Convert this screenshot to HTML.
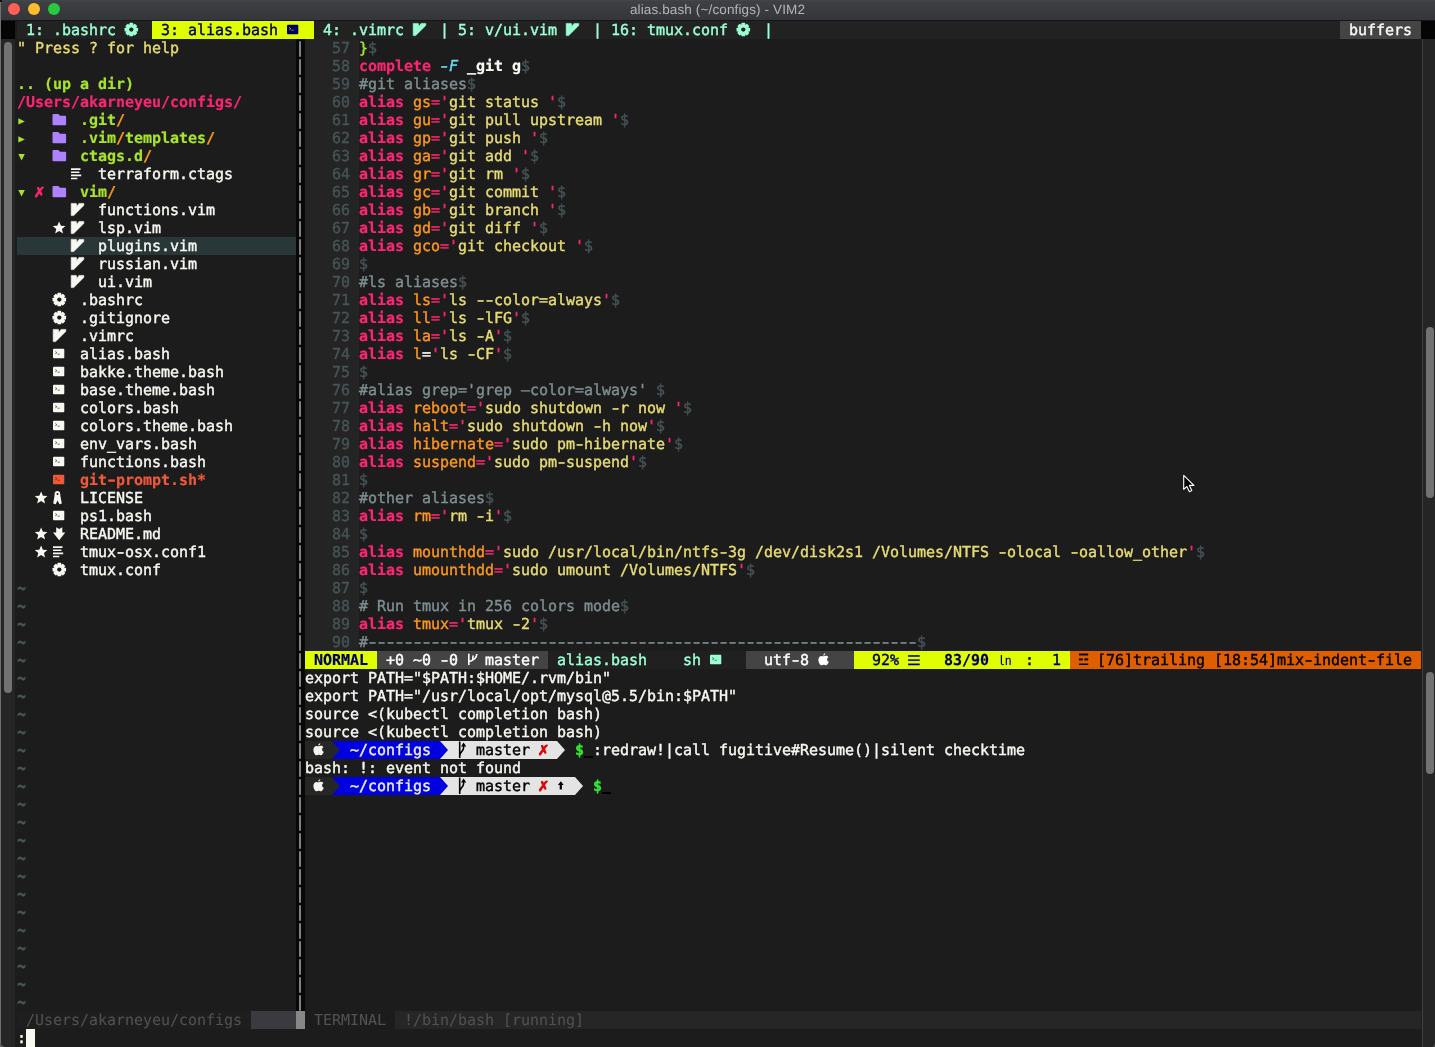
<!DOCTYPE html>
<html lang="en"><head><meta charset="utf-8"><title>alias.bash (~/configs) - VIM2</title>
<style>
html,body{margin:0;padding:0}
body{width:1435px;height:1047px;overflow:hidden;background:#1c1c1c;position:relative;font-family:"DejaVu Sans Mono","Liberation Mono",monospace;font-size:15px;letter-spacing:-0.031px;text-rendering:geometricPrecision}
.s{position:absolute;white-space:pre;height:18px;line-height:18px;color:#f8f8f2;-webkit-text-stroke:.4px}
.s b{display:inline-block;font-weight:inherit;transform:scaleX(1.4)}
.k{position:absolute;display:block;height:18px}
.ic{position:absolute;overflow:visible}
.vb{position:absolute;display:block;width:2.3px;height:15.6px;background:#818181;border-radius:1px}
.bd{font-weight:bold;-webkit-text-stroke:.2px}
.it{font-style:italic}
.td{transform:scaleY(1.4);transform-origin:0 9.5px;margin-top:.3px}
.w{color:#f8f8f2}.wh{color:#ffffff}.bk{color:#000}
.p{color:#f92672}.o{color:#fd971f}.y{color:#e6db74}.g{color:#a6e22e}.c{color:#7e8e91}.n{color:#465457}.b{color:#66d9ef}
.aq{color:#9cffd3}.nv{color:#00005f}.ex{color:#ef5939}.dm{color:#515151;-webkit-text-stroke:.1px}.rd{color:#e00000}.pw{color:#ececec}.tg{color:#31e831;-webkit-text-stroke:.4px !important}
.xx{font-size:17px;-webkit-text-stroke:.9px;margin-left:-.8px;margin-top:.3px}
.dj{font-family:'DejaVu Sans',sans-serif;font-size:13.5px;margin-left:-.6px;margin-top:.5px;-webkit-text-stroke:.3px;transform:scaleX(1.14);transform-origin:0 50%}
.dj2{font-family:'DejaVu Sans',sans-serif;font-size:15.5px;transform:scaleX(.8);transform-origin:0 50%;margin-left:-1.2px;-webkit-text-stroke:.2px}
.cj{font-family:'Noto Sans CJK JP','Liberation Sans',sans-serif;font-size:13.2px;margin-left:.6px;margin-top:-.5px;-webkit-text-stroke:0}
#title{position:absolute;left:0;top:0;width:1435px;height:21px;background:linear-gradient(#3e4043,#34363a);border-top:1px solid #40464a;border-bottom:1px solid #161616;box-sizing:border-box}
#title span{position:absolute;left:0;width:1435px;top:-1px;line-height:19px;text-align:center;font-family:"Liberation Sans",sans-serif;font-size:13.5px;letter-spacing:.13px;color:#b4b4b4}
.tl{position:absolute;top:2px;width:12px;height:12px;border-radius:50%}
#lsb{position:absolute;left:0;top:39px;width:15px;height:1008px;background:#252525}
#lsb b{position:absolute;left:4px;top:3px;width:8px;height:651px;border-radius:4px;background:#727272}
#rsb{position:absolute;left:1422px;top:39px;width:13px;height:1008px;background:#252525;border-left:1px solid #424242;box-sizing:border-box}
#rsb b{position:absolute;left:3px;width:8px;border-radius:4px;background:#727272}
#wrap{position:absolute;left:0;top:0;width:1435px;height:1047px;will-change:transform}
#edge{position:absolute;left:0;top:2px;width:1.2px;height:1043px;background:#6e706f}
#c1{position:absolute;left:0;top:0;width:2px;height:2px;background:#111}
</style></head>
<body>
<div id="wrap">
<i class="k" style="left:0;top:21px;width:15px;background:#050505"></i>
<i class="k" style="left:1421px;top:21px;width:14px;background:#050505"></i>
<div id="lsb"><b></b></div>
<div id="rsb"><b style="top:288px;height:170.5px"></b><b style="top:632.6px;height:102.5px"></b></div>
<i class="k" style="left:17px;top:21px;width:1404px;background:#222222"></i>
<i class="k" style="left:152px;top:21px;width:162px;background:#dfff00"></i>
<i class="k" style="left:1340px;top:21px;width:81px;background:#444444"></i>
<span class="s aq" style="left:26px;top:21px">1: .bashrc</span>
<svg class="ic" style="left:125px;top:21px" width="18" height="18" viewBox="0 0 18 18" fill="#9cffd3"><g transform="translate(6.3 8.6)"><circle r="5.4"/><rect x="-1.9" y="-6.75" width="3.8" height="3" rx=".6" transform="rotate(0)"/><rect x="-1.9" y="-6.75" width="3.8" height="3" rx=".6" transform="rotate(45)"/><rect x="-1.9" y="-6.75" width="3.8" height="3" rx=".6" transform="rotate(90)"/><rect x="-1.9" y="-6.75" width="3.8" height="3" rx=".6" transform="rotate(135)"/><rect x="-1.9" y="-6.75" width="3.8" height="3" rx=".6" transform="rotate(180)"/><rect x="-1.9" y="-6.75" width="3.8" height="3" rx=".6" transform="rotate(225)"/><rect x="-1.9" y="-6.75" width="3.8" height="3" rx=".6" transform="rotate(270)"/><rect x="-1.9" y="-6.75" width="3.8" height="3" rx=".6" transform="rotate(315)"/><circle r="2.15" fill="#222222"/></g></svg>
<span class="s nv" style="left:161px;top:21px">3: alias.bash</span>
<svg class="ic" style="left:287px;top:21px" width="18" height="18" viewBox="0 0 18 18" fill="#00005f"><rect x="0" y="3.8" width="11.3" height="9.4" rx="1"/><path d="M2.2 6.5L4 7.7L2.2 8.9M4.5 9.2H6.8" stroke="#dfff00" stroke-width=".8" stroke-opacity=".75" fill="none"/></svg>
<span class="s aq" style="left:323px;top:21px">4: .vimrc</span>
<svg class="ic" style="left:413px;top:21px" width="18" height="18" viewBox="0 0 18 18" fill="#9cffd3"><path d="M.2 2.4H5.3L5.9 5.4L8 2.4H12.8V4.5L2.7 14.6H.2Z" stroke="#9cffd3" stroke-width=".6" stroke-linejoin="round"/></svg>
<span class="s aq" style="left:440px;top:21px">| 5: v/ui.vim</span>
<svg class="ic" style="left:566px;top:21px" width="18" height="18" viewBox="0 0 18 18" fill="#9cffd3"><path d="M.2 2.4H5.3L5.9 5.4L8 2.4H12.8V4.5L2.7 14.6H.2Z" stroke="#9cffd3" stroke-width=".6" stroke-linejoin="round"/></svg>
<span class="s aq" style="left:593px;top:21px">| 16: tmux.conf</span>
<svg class="ic" style="left:737px;top:21px" width="18" height="18" viewBox="0 0 18 18" fill="#9cffd3"><g transform="translate(6.3 8.6)"><circle r="5.4"/><rect x="-1.9" y="-6.75" width="3.8" height="3" rx=".6" transform="rotate(0)"/><rect x="-1.9" y="-6.75" width="3.8" height="3" rx=".6" transform="rotate(45)"/><rect x="-1.9" y="-6.75" width="3.8" height="3" rx=".6" transform="rotate(90)"/><rect x="-1.9" y="-6.75" width="3.8" height="3" rx=".6" transform="rotate(135)"/><rect x="-1.9" y="-6.75" width="3.8" height="3" rx=".6" transform="rotate(180)"/><rect x="-1.9" y="-6.75" width="3.8" height="3" rx=".6" transform="rotate(225)"/><rect x="-1.9" y="-6.75" width="3.8" height="3" rx=".6" transform="rotate(270)"/><rect x="-1.9" y="-6.75" width="3.8" height="3" rx=".6" transform="rotate(315)"/><circle r="2.15" fill="#222222"/></g></svg>
<span class="s aq" style="left:764px;top:21px">|</span>
<span class="s w" style="left:1349px;top:21px">buffers</span>
<span class="s y" style="left:17px;top:39px">" Press ? for help</span>
<span class="s g bd" style="left:17px;top:75px">.. (up a dir)</span>
<span class="s p bd" style="left:17px;top:93px">/Users/akarneyeu/configs/</span>
<svg class="ic" style="left:17px;top:111px" width="18" height="18" viewBox="0 0 18 18" fill="#a6e22e"><path d="M1.3 7.3L7.8 10.4L1.3 13.6Z"/></svg>
<svg class="ic" style="left:53px;top:111px" width="18" height="18" viewBox="0 0 18 18" fill="#ae81ff"><path d="M-.5 4.1Q-.5 3.1 .5 3.1H5.4L7 4.8H12.1Q13.1 4.8 13.1 5.8V13.2Q13.1 14.2 12.1 14.2H.5Q-.5 14.2 -.5 13.2Z"/></svg>
<span class="s g bd" style="left:80px;top:111px">.git</span>
<span class="s o bd" style="left:116px;top:111px">/</span>
<svg class="ic" style="left:17px;top:129px" width="18" height="18" viewBox="0 0 18 18" fill="#a6e22e"><path d="M1.3 7.3L7.8 10.4L1.3 13.6Z"/></svg>
<svg class="ic" style="left:53px;top:129px" width="18" height="18" viewBox="0 0 18 18" fill="#ae81ff"><path d="M-.5 4.1Q-.5 3.1 .5 3.1H5.4L7 4.8H12.1Q13.1 4.8 13.1 5.8V13.2Q13.1 14.2 12.1 14.2H.5Q-.5 14.2 -.5 13.2Z"/></svg>
<span class="s g bd" style="left:80px;top:129px">.vim</span>
<span class="s o bd" style="left:116px;top:129px">/</span>
<span class="s g bd" style="left:125px;top:129px">templates</span>
<span class="s o bd" style="left:206px;top:129px">/</span>
<svg class="ic" style="left:17px;top:147px" width="18" height="18" viewBox="0 0 18 18" fill="#a6e22e"><path d="M1.3 7.1H7.8L4.55 13.6Z"/></svg>
<svg class="ic" style="left:53px;top:147px" width="18" height="18" viewBox="0 0 18 18" fill="#ae81ff"><path d="M-.5 4.1Q-.5 3.1 .5 3.1H5.4L7 4.8H12.1Q13.1 4.8 13.1 5.8V13.2Q13.1 14.2 12.1 14.2H.5Q-.5 14.2 -.5 13.2Z"/></svg>
<span class="s g bd" style="left:80px;top:147px">ctags.d</span>
<span class="s o bd" style="left:143px;top:147px">/</span>
<svg class="ic" style="left:71px;top:165px" width="18" height="18" viewBox="0 0 18 18" fill="#f8f8f2"><path d="M0 3.2H9.5V4.9H0ZM0 6.4H8.4V8.1H0ZM0 9.5H10.2V11.2H0ZM0 12.7H6.3V14.3H0Z"/></svg>
<span class="s w" style="left:98px;top:165px">terraform.ctags</span>
<svg class="ic" style="left:17px;top:183px" width="18" height="18" viewBox="0 0 18 18" fill="#a6e22e"><path d="M1.3 7.1H7.8L4.55 13.6Z"/></svg>
<span class="s p bd xx" style="left:35px;top:183px">✗</span>
<svg class="ic" style="left:53px;top:183px" width="18" height="18" viewBox="0 0 18 18" fill="#ae81ff"><path d="M-.5 4.1Q-.5 3.1 .5 3.1H5.4L7 4.8H12.1Q13.1 4.8 13.1 5.8V13.2Q13.1 14.2 12.1 14.2H.5Q-.5 14.2 -.5 13.2Z"/></svg>
<span class="s g bd" style="left:80px;top:183px">vim</span>
<span class="s o bd" style="left:107px;top:183px">/</span>
<i class="k" style="left:17px;top:237px;width:279px;background:#293739"></i>
<svg class="ic" style="left:71px;top:201px" width="18" height="18" viewBox="0 0 18 18" fill="#f8f8f2"><path d="M.2 2.4H5.3L5.9 5.4L8 2.4H12.8V4.5L2.7 14.6H.2Z" stroke="#f8f8f2" stroke-width=".6" stroke-linejoin="round"/></svg>
<span class="s w" style="left:98px;top:201px">functions.vim</span>
<svg class="ic" style="left:71px;top:219px" width="18" height="18" viewBox="0 0 18 18" fill="#f8f8f2"><path d="M.2 2.4H5.3L5.9 5.4L8 2.4H12.8V4.5L2.7 14.6H.2Z" stroke="#f8f8f2" stroke-width=".6" stroke-linejoin="round"/></svg>
<span class="s w" style="left:98px;top:219px">lsp.vim</span>
<svg class="ic" style="left:71px;top:237px" width="18" height="18" viewBox="0 0 18 18" fill="#f8f8f2"><path d="M.2 2.4H5.3L5.9 5.4L8 2.4H12.8V4.5L2.7 14.6H.2Z" stroke="#f8f8f2" stroke-width=".6" stroke-linejoin="round"/></svg>
<span class="s w" style="left:98px;top:237px">plugins.vim</span>
<svg class="ic" style="left:71px;top:255px" width="18" height="18" viewBox="0 0 18 18" fill="#f8f8f2"><path d="M.2 2.4H5.3L5.9 5.4L8 2.4H12.8V4.5L2.7 14.6H.2Z" stroke="#f8f8f2" stroke-width=".6" stroke-linejoin="round"/></svg>
<span class="s w" style="left:98px;top:255px">russian.vim</span>
<svg class="ic" style="left:71px;top:273px" width="18" height="18" viewBox="0 0 18 18" fill="#f8f8f2"><path d="M.2 2.4H5.3L5.9 5.4L8 2.4H12.8V4.5L2.7 14.6H.2Z" stroke="#f8f8f2" stroke-width=".6" stroke-linejoin="round"/></svg>
<span class="s w" style="left:98px;top:273px">ui.vim</span>
<svg class="ic" style="left:53px;top:219px" width="18" height="18" viewBox="0 0 18 18" fill="#f8f8f2"><path d="M6.1 2.4L7.9 6.7L12.4 7L8.95 9.9L10.05 14.4L6.1 12L2.15 14.4L3.25 9.9L-.2 7L4.3 6.7Z"/></svg>
<svg class="ic" style="left:53px;top:291px" width="18" height="18" viewBox="0 0 18 18" fill="#f8f8f2"><g transform="translate(6.3 8.6)"><circle r="5.4"/><rect x="-1.9" y="-6.75" width="3.8" height="3" rx=".6" transform="rotate(0)"/><rect x="-1.9" y="-6.75" width="3.8" height="3" rx=".6" transform="rotate(45)"/><rect x="-1.9" y="-6.75" width="3.8" height="3" rx=".6" transform="rotate(90)"/><rect x="-1.9" y="-6.75" width="3.8" height="3" rx=".6" transform="rotate(135)"/><rect x="-1.9" y="-6.75" width="3.8" height="3" rx=".6" transform="rotate(180)"/><rect x="-1.9" y="-6.75" width="3.8" height="3" rx=".6" transform="rotate(225)"/><rect x="-1.9" y="-6.75" width="3.8" height="3" rx=".6" transform="rotate(270)"/><rect x="-1.9" y="-6.75" width="3.8" height="3" rx=".6" transform="rotate(315)"/><circle r="2.15" fill="#1c1c1c"/></g></svg>
<span class="s w" style="left:80px;top:291px">.bashrc</span>
<svg class="ic" style="left:53px;top:309px" width="18" height="18" viewBox="0 0 18 18" fill="#f8f8f2"><g transform="translate(6.3 8.6)"><circle r="5.4"/><rect x="-1.9" y="-6.75" width="3.8" height="3" rx=".6" transform="rotate(0)"/><rect x="-1.9" y="-6.75" width="3.8" height="3" rx=".6" transform="rotate(45)"/><rect x="-1.9" y="-6.75" width="3.8" height="3" rx=".6" transform="rotate(90)"/><rect x="-1.9" y="-6.75" width="3.8" height="3" rx=".6" transform="rotate(135)"/><rect x="-1.9" y="-6.75" width="3.8" height="3" rx=".6" transform="rotate(180)"/><rect x="-1.9" y="-6.75" width="3.8" height="3" rx=".6" transform="rotate(225)"/><rect x="-1.9" y="-6.75" width="3.8" height="3" rx=".6" transform="rotate(270)"/><rect x="-1.9" y="-6.75" width="3.8" height="3" rx=".6" transform="rotate(315)"/><circle r="2.15" fill="#1c1c1c"/></g></svg>
<span class="s w" style="left:80px;top:309px">.gitignore</span>
<svg class="ic" style="left:53px;top:327px" width="18" height="18" viewBox="0 0 18 18" fill="#f8f8f2"><path d="M.2 2.4H5.3L5.9 5.4L8 2.4H12.8V4.5L2.7 14.6H.2Z" stroke="#f8f8f2" stroke-width=".6" stroke-linejoin="round"/></svg>
<span class="s w" style="left:80px;top:327px">.vimrc</span>
<svg class="ic" style="left:53px;top:345px" width="18" height="18" viewBox="0 0 18 18" fill="#f8f8f2"><rect x="0" y="3.8" width="11.3" height="9.4" rx="1"/><path d="M2.2 6.5L4 7.7L2.2 8.9M4.5 9.2H6.8" stroke="#1c1c1c" stroke-width=".8" stroke-opacity=".75" fill="none"/></svg>
<span class="s w" style="left:80px;top:345px">alias.bash</span>
<svg class="ic" style="left:53px;top:363px" width="18" height="18" viewBox="0 0 18 18" fill="#f8f8f2"><rect x="0" y="3.8" width="11.3" height="9.4" rx="1"/><path d="M2.2 6.5L4 7.7L2.2 8.9M4.5 9.2H6.8" stroke="#1c1c1c" stroke-width=".8" stroke-opacity=".75" fill="none"/></svg>
<span class="s w" style="left:80px;top:363px">bakke.theme.bash</span>
<svg class="ic" style="left:53px;top:381px" width="18" height="18" viewBox="0 0 18 18" fill="#f8f8f2"><rect x="0" y="3.8" width="11.3" height="9.4" rx="1"/><path d="M2.2 6.5L4 7.7L2.2 8.9M4.5 9.2H6.8" stroke="#1c1c1c" stroke-width=".8" stroke-opacity=".75" fill="none"/></svg>
<span class="s w" style="left:80px;top:381px">base.theme.bash</span>
<svg class="ic" style="left:53px;top:399px" width="18" height="18" viewBox="0 0 18 18" fill="#f8f8f2"><rect x="0" y="3.8" width="11.3" height="9.4" rx="1"/><path d="M2.2 6.5L4 7.7L2.2 8.9M4.5 9.2H6.8" stroke="#1c1c1c" stroke-width=".8" stroke-opacity=".75" fill="none"/></svg>
<span class="s w" style="left:80px;top:399px">colors.bash</span>
<svg class="ic" style="left:53px;top:417px" width="18" height="18" viewBox="0 0 18 18" fill="#f8f8f2"><rect x="0" y="3.8" width="11.3" height="9.4" rx="1"/><path d="M2.2 6.5L4 7.7L2.2 8.9M4.5 9.2H6.8" stroke="#1c1c1c" stroke-width=".8" stroke-opacity=".75" fill="none"/></svg>
<span class="s w" style="left:80px;top:417px">colors.theme.bash</span>
<svg class="ic" style="left:53px;top:435px" width="18" height="18" viewBox="0 0 18 18" fill="#f8f8f2"><rect x="0" y="3.8" width="11.3" height="9.4" rx="1"/><path d="M2.2 6.5L4 7.7L2.2 8.9M4.5 9.2H6.8" stroke="#1c1c1c" stroke-width=".8" stroke-opacity=".75" fill="none"/></svg>
<span class="s w" style="left:80px;top:435px">env_vars.bash</span>
<svg class="ic" style="left:53px;top:453px" width="18" height="18" viewBox="0 0 18 18" fill="#f8f8f2"><rect x="0" y="3.8" width="11.3" height="9.4" rx="1"/><path d="M2.2 6.5L4 7.7L2.2 8.9M4.5 9.2H6.8" stroke="#1c1c1c" stroke-width=".8" stroke-opacity=".75" fill="none"/></svg>
<span class="s w" style="left:80px;top:453px">functions.bash</span>
<svg class="ic" style="left:53px;top:471px" width="18" height="18" viewBox="0 0 18 18" fill="#ef5939"><rect x="0" y="3.8" width="11.3" height="9.4" rx="1"/><path d="M2.2 6.5L4 7.7L2.2 8.9M4.5 9.2H6.8" stroke="#1c1c1c" stroke-width=".8" stroke-opacity=".75" fill="none"/></svg>
<span class="s ex bd" style="left:80px;top:471px">git<b>-</b>prompt.sh*</span>
<svg class="ic" style="left:53px;top:489px" width="18" height="18" viewBox="0 0 18 18" fill="#f8f8f2"><path d="M4.4 2C6.2 2 7.2 3.2 7.2 5L7.5 7.6L8.8 14.5L6.5 15.2L4.6 11.4L2.7 15.2L.2 14.4L1.4 7.6L1.6 5C1.6 3.2 2.6 2 4.4 2ZM4.5 4A1 1 0 0 0 4.5 6A1 1 0 0 0 4.5 4Z" fill-rule="evenodd"/></svg>
<span class="s w" style="left:80px;top:489px">LICENSE</span>
<svg class="ic" style="left:35px;top:489px" width="18" height="18" viewBox="0 0 18 18" fill="#f8f8f2"><path d="M6.1 2.4L7.9 6.7L12.4 7L8.95 9.9L10.05 14.4L6.1 12L2.15 14.4L3.25 9.9L-.2 7L4.3 6.7Z"/></svg>
<svg class="ic" style="left:53px;top:507px" width="18" height="18" viewBox="0 0 18 18" fill="#f8f8f2"><rect x="0" y="3.8" width="11.3" height="9.4" rx="1"/><path d="M2.2 6.5L4 7.7L2.2 8.9M4.5 9.2H6.8" stroke="#1c1c1c" stroke-width=".8" stroke-opacity=".75" fill="none"/></svg>
<span class="s w" style="left:80px;top:507px">ps1.bash</span>
<svg class="ic" style="left:53px;top:525px" width="18" height="18" viewBox="0 0 18 18" fill="#f8f8f2"><path d="M3.2 2.3L6.2 4L9.3 2.3V7.5H12.3L6.2 15.2L0 7.5H3.2Z"/></svg>
<span class="s w" style="left:80px;top:525px">README.md</span>
<svg class="ic" style="left:35px;top:525px" width="18" height="18" viewBox="0 0 18 18" fill="#f8f8f2"><path d="M6.1 2.4L7.9 6.7L12.4 7L8.95 9.9L10.05 14.4L6.1 12L2.15 14.4L3.25 9.9L-.2 7L4.3 6.7Z"/></svg>
<svg class="ic" style="left:53px;top:543px" width="18" height="18" viewBox="0 0 18 18" fill="#f8f8f2"><path d="M0 3.2H9.5V4.9H0ZM0 6.4H8.4V8.1H0ZM0 9.5H10.2V11.2H0ZM0 12.7H6.3V14.3H0Z"/></svg>
<span class="s w" style="left:80px;top:543px">tmux<b>-</b>osx.conf1</span>
<svg class="ic" style="left:35px;top:543px" width="18" height="18" viewBox="0 0 18 18" fill="#f8f8f2"><path d="M6.1 2.4L7.9 6.7L12.4 7L8.95 9.9L10.05 14.4L6.1 12L2.15 14.4L3.25 9.9L-.2 7L4.3 6.7Z"/></svg>
<svg class="ic" style="left:53px;top:561px" width="18" height="18" viewBox="0 0 18 18" fill="#f8f8f2"><g transform="translate(6.3 8.6)"><circle r="5.4"/><rect x="-1.9" y="-6.75" width="3.8" height="3" rx=".6" transform="rotate(0)"/><rect x="-1.9" y="-6.75" width="3.8" height="3" rx=".6" transform="rotate(45)"/><rect x="-1.9" y="-6.75" width="3.8" height="3" rx=".6" transform="rotate(90)"/><rect x="-1.9" y="-6.75" width="3.8" height="3" rx=".6" transform="rotate(135)"/><rect x="-1.9" y="-6.75" width="3.8" height="3" rx=".6" transform="rotate(180)"/><rect x="-1.9" y="-6.75" width="3.8" height="3" rx=".6" transform="rotate(225)"/><rect x="-1.9" y="-6.75" width="3.8" height="3" rx=".6" transform="rotate(270)"/><rect x="-1.9" y="-6.75" width="3.8" height="3" rx=".6" transform="rotate(315)"/><circle r="2.15" fill="#1c1c1c"/></g></svg>
<span class="s w" style="left:80px;top:561px">tmux.conf</span>
<span class="s n bd td" style="left:17px;top:579px">~</span>
<span class="s n bd td" style="left:17px;top:597px">~</span>
<span class="s n bd td" style="left:17px;top:615px">~</span>
<span class="s n bd td" style="left:17px;top:633px">~</span>
<span class="s n bd td" style="left:17px;top:651px">~</span>
<span class="s n bd td" style="left:17px;top:669px">~</span>
<span class="s n bd td" style="left:17px;top:687px">~</span>
<span class="s n bd td" style="left:17px;top:705px">~</span>
<span class="s n bd td" style="left:17px;top:723px">~</span>
<span class="s n bd td" style="left:17px;top:741px">~</span>
<span class="s n bd td" style="left:17px;top:759px">~</span>
<span class="s n bd td" style="left:17px;top:777px">~</span>
<span class="s n bd td" style="left:17px;top:795px">~</span>
<span class="s n bd td" style="left:17px;top:813px">~</span>
<span class="s n bd td" style="left:17px;top:831px">~</span>
<span class="s n bd td" style="left:17px;top:849px">~</span>
<span class="s n bd td" style="left:17px;top:867px">~</span>
<span class="s n bd td" style="left:17px;top:885px">~</span>
<span class="s n bd td" style="left:17px;top:903px">~</span>
<span class="s n bd td" style="left:17px;top:921px">~</span>
<span class="s n bd td" style="left:17px;top:939px">~</span>
<span class="s n bd td" style="left:17px;top:957px">~</span>
<span class="s n bd td" style="left:17px;top:975px">~</span>
<span class="s n bd td" style="left:17px;top:993px">~</span>
<i class="k" style="left:296px;top:39px;width:9px;height:972px;background:#080808"></i>
<i class="vb" style="left:299.2px;top:41.1px"></i>
<i class="vb" style="left:299.2px;top:59.1px"></i>
<i class="vb" style="left:299.2px;top:77.1px"></i>
<i class="vb" style="left:299.2px;top:95.1px"></i>
<i class="vb" style="left:299.2px;top:113.1px"></i>
<i class="vb" style="left:299.2px;top:131.1px"></i>
<i class="vb" style="left:299.2px;top:149.1px"></i>
<i class="vb" style="left:299.2px;top:167.1px"></i>
<i class="vb" style="left:299.2px;top:185.1px"></i>
<i class="vb" style="left:299.2px;top:203.1px"></i>
<i class="vb" style="left:299.2px;top:221.1px"></i>
<i class="vb" style="left:299.2px;top:239.1px"></i>
<i class="vb" style="left:299.2px;top:257.1px"></i>
<i class="vb" style="left:299.2px;top:275.1px"></i>
<i class="vb" style="left:299.2px;top:293.1px"></i>
<i class="vb" style="left:299.2px;top:311.1px"></i>
<i class="vb" style="left:299.2px;top:329.1px"></i>
<i class="vb" style="left:299.2px;top:347.1px"></i>
<i class="vb" style="left:299.2px;top:365.1px"></i>
<i class="vb" style="left:299.2px;top:383.1px"></i>
<i class="vb" style="left:299.2px;top:401.1px"></i>
<i class="vb" style="left:299.2px;top:419.1px"></i>
<i class="vb" style="left:299.2px;top:437.1px"></i>
<i class="vb" style="left:299.2px;top:455.1px"></i>
<i class="vb" style="left:299.2px;top:473.1px"></i>
<i class="vb" style="left:299.2px;top:491.1px"></i>
<i class="vb" style="left:299.2px;top:509.1px"></i>
<i class="vb" style="left:299.2px;top:527.1px"></i>
<i class="vb" style="left:299.2px;top:545.1px"></i>
<i class="vb" style="left:299.2px;top:563.1px"></i>
<i class="vb" style="left:299.2px;top:581.1px"></i>
<i class="vb" style="left:299.2px;top:599.1px"></i>
<i class="vb" style="left:299.2px;top:617.1px"></i>
<i class="vb" style="left:299.2px;top:635.1px"></i>
<i class="vb" style="left:299.2px;top:653.1px"></i>
<i class="vb" style="left:299.2px;top:671.1px"></i>
<i class="vb" style="left:299.2px;top:689.1px"></i>
<i class="vb" style="left:299.2px;top:707.1px"></i>
<i class="vb" style="left:299.2px;top:725.1px"></i>
<i class="vb" style="left:299.2px;top:743.1px"></i>
<i class="vb" style="left:299.2px;top:761.1px"></i>
<i class="vb" style="left:299.2px;top:779.1px"></i>
<i class="vb" style="left:299.2px;top:797.1px"></i>
<i class="vb" style="left:299.2px;top:815.1px"></i>
<i class="vb" style="left:299.2px;top:833.1px"></i>
<i class="vb" style="left:299.2px;top:851.1px"></i>
<i class="vb" style="left:299.2px;top:869.1px"></i>
<i class="vb" style="left:299.2px;top:887.1px"></i>
<i class="vb" style="left:299.2px;top:905.1px"></i>
<i class="vb" style="left:299.2px;top:923.1px"></i>
<i class="vb" style="left:299.2px;top:941.1px"></i>
<i class="vb" style="left:299.2px;top:959.1px"></i>
<i class="vb" style="left:299.2px;top:977.1px"></i>
<i class="vb" style="left:299.2px;top:995.1px"></i>
<i class="k" style="left:305px;top:39px;width:54px;height:612px;background:#242424"></i>
<span class="s n" style="left:332px;top:39px">57</span>
<span class="s g" style="left:359px;top:39px">}</span>
<span class="s n" style="left:368px;top:39px">$</span>
<span class="s n" style="left:332px;top:57px">58</span>
<span class="s p bd" style="left:359px;top:57px">complete</span>
<span class="s b it" style="left:440px;top:57px"><b>-</b>F</span>
<span class="s w bd" style="left:467px;top:57px">_git g</span>
<span class="s n" style="left:521px;top:57px">$</span>
<span class="s n" style="left:332px;top:75px">59</span>
<span class="s c" style="left:359px;top:75px">#git aliases</span>
<span class="s n" style="left:467px;top:75px">$</span>
<span class="s n" style="left:332px;top:93px">60</span>
<span class="s p bd" style="left:359px;top:93px">alias</span>
<span class="s o" style="left:413px;top:93px">gs</span>
<span class="s p" style="left:431px;top:93px">=</span>
<span class="s p" style="left:440px;top:93px">'</span>
<span class="s y" style="left:449px;top:93px">git status </span>
<span class="s p" style="left:548px;top:93px">'</span>
<span class="s n" style="left:557px;top:93px">$</span>
<span class="s n" style="left:332px;top:111px">61</span>
<span class="s p bd" style="left:359px;top:111px">alias</span>
<span class="s o" style="left:413px;top:111px">gu</span>
<span class="s p" style="left:431px;top:111px">=</span>
<span class="s p" style="left:440px;top:111px">'</span>
<span class="s y" style="left:449px;top:111px">git pull upstream </span>
<span class="s p" style="left:611px;top:111px">'</span>
<span class="s n" style="left:620px;top:111px">$</span>
<span class="s n" style="left:332px;top:129px">62</span>
<span class="s p bd" style="left:359px;top:129px">alias</span>
<span class="s o" style="left:413px;top:129px">gp</span>
<span class="s p" style="left:431px;top:129px">=</span>
<span class="s p" style="left:440px;top:129px">'</span>
<span class="s y" style="left:449px;top:129px">git push </span>
<span class="s p" style="left:530px;top:129px">'</span>
<span class="s n" style="left:539px;top:129px">$</span>
<span class="s n" style="left:332px;top:147px">63</span>
<span class="s p bd" style="left:359px;top:147px">alias</span>
<span class="s o" style="left:413px;top:147px">ga</span>
<span class="s p" style="left:431px;top:147px">=</span>
<span class="s p" style="left:440px;top:147px">'</span>
<span class="s y" style="left:449px;top:147px">git add </span>
<span class="s p" style="left:521px;top:147px">'</span>
<span class="s n" style="left:530px;top:147px">$</span>
<span class="s n" style="left:332px;top:165px">64</span>
<span class="s p bd" style="left:359px;top:165px">alias</span>
<span class="s o" style="left:413px;top:165px">gr</span>
<span class="s p" style="left:431px;top:165px">=</span>
<span class="s p" style="left:440px;top:165px">'</span>
<span class="s y" style="left:449px;top:165px">git rm </span>
<span class="s p" style="left:512px;top:165px">'</span>
<span class="s n" style="left:521px;top:165px">$</span>
<span class="s n" style="left:332px;top:183px">65</span>
<span class="s p bd" style="left:359px;top:183px">alias</span>
<span class="s o" style="left:413px;top:183px">gc</span>
<span class="s p" style="left:431px;top:183px">=</span>
<span class="s p" style="left:440px;top:183px">'</span>
<span class="s y" style="left:449px;top:183px">git commit </span>
<span class="s p" style="left:548px;top:183px">'</span>
<span class="s n" style="left:557px;top:183px">$</span>
<span class="s n" style="left:332px;top:201px">66</span>
<span class="s p bd" style="left:359px;top:201px">alias</span>
<span class="s o" style="left:413px;top:201px">gb</span>
<span class="s p" style="left:431px;top:201px">=</span>
<span class="s p" style="left:440px;top:201px">'</span>
<span class="s y" style="left:449px;top:201px">git branch </span>
<span class="s p" style="left:548px;top:201px">'</span>
<span class="s n" style="left:557px;top:201px">$</span>
<span class="s n" style="left:332px;top:219px">67</span>
<span class="s p bd" style="left:359px;top:219px">alias</span>
<span class="s o" style="left:413px;top:219px">gd</span>
<span class="s p" style="left:431px;top:219px">=</span>
<span class="s p" style="left:440px;top:219px">'</span>
<span class="s y" style="left:449px;top:219px">git diff </span>
<span class="s p" style="left:530px;top:219px">'</span>
<span class="s n" style="left:539px;top:219px">$</span>
<span class="s n" style="left:332px;top:237px">68</span>
<span class="s p bd" style="left:359px;top:237px">alias</span>
<span class="s o" style="left:413px;top:237px">gco</span>
<span class="s p" style="left:440px;top:237px">=</span>
<span class="s p" style="left:449px;top:237px">'</span>
<span class="s y" style="left:458px;top:237px">git checkout </span>
<span class="s p" style="left:575px;top:237px">'</span>
<span class="s n" style="left:584px;top:237px">$</span>
<span class="s n" style="left:332px;top:255px">69</span>
<span class="s n" style="left:359px;top:255px">$</span>
<span class="s n" style="left:332px;top:273px">70</span>
<span class="s c" style="left:359px;top:273px">#ls aliases</span>
<span class="s n" style="left:458px;top:273px">$</span>
<span class="s n" style="left:332px;top:291px">71</span>
<span class="s p bd" style="left:359px;top:291px">alias</span>
<span class="s o" style="left:413px;top:291px">ls</span>
<span class="s p" style="left:431px;top:291px">=</span>
<span class="s p" style="left:440px;top:291px">'</span>
<span class="s y" style="left:449px;top:291px">ls <b>-</b><b>-</b>color=always</span>
<span class="s p" style="left:602px;top:291px">'</span>
<span class="s n" style="left:611px;top:291px">$</span>
<span class="s n" style="left:332px;top:309px">72</span>
<span class="s p bd" style="left:359px;top:309px">alias</span>
<span class="s o" style="left:413px;top:309px">ll</span>
<span class="s p" style="left:431px;top:309px">=</span>
<span class="s p" style="left:440px;top:309px">'</span>
<span class="s y" style="left:449px;top:309px">ls <b>-</b>lFG</span>
<span class="s p" style="left:512px;top:309px">'</span>
<span class="s n" style="left:521px;top:309px">$</span>
<span class="s n" style="left:332px;top:327px">73</span>
<span class="s p bd" style="left:359px;top:327px">alias</span>
<span class="s o" style="left:413px;top:327px">la</span>
<span class="s p" style="left:431px;top:327px">=</span>
<span class="s p" style="left:440px;top:327px">'</span>
<span class="s y" style="left:449px;top:327px">ls <b>-</b>A</span>
<span class="s p" style="left:494px;top:327px">'</span>
<span class="s n" style="left:503px;top:327px">$</span>
<span class="s n" style="left:332px;top:345px">74</span>
<span class="s p bd" style="left:359px;top:345px">alias</span>
<span class="s o" style="left:413px;top:345px">l</span>
<span class="s w" style="left:422px;top:345px">=</span>
<span class="s p" style="left:431px;top:345px">'</span>
<span class="s y" style="left:440px;top:345px">ls <b>-</b>CF</span>
<span class="s p" style="left:494px;top:345px">'</span>
<span class="s n" style="left:503px;top:345px">$</span>
<span class="s n" style="left:332px;top:363px">75</span>
<span class="s n" style="left:359px;top:363px">$</span>
<span class="s n" style="left:332px;top:381px">76</span>
<span class="s c" style="left:359px;top:381px">#alias grep='grep —color=always' </span>
<span class="s n" style="left:656px;top:381px">$</span>
<span class="s n" style="left:332px;top:399px">77</span>
<span class="s p bd" style="left:359px;top:399px">alias</span>
<span class="s o" style="left:413px;top:399px">reboot</span>
<span class="s p" style="left:467px;top:399px">=</span>
<span class="s p" style="left:476px;top:399px">'</span>
<span class="s y" style="left:485px;top:399px">sudo shutdown <b>-</b>r now </span>
<span class="s p" style="left:674px;top:399px">'</span>
<span class="s n" style="left:683px;top:399px">$</span>
<span class="s n" style="left:332px;top:417px">78</span>
<span class="s p bd" style="left:359px;top:417px">alias</span>
<span class="s o" style="left:413px;top:417px">halt</span>
<span class="s p" style="left:449px;top:417px">=</span>
<span class="s p" style="left:458px;top:417px">'</span>
<span class="s y" style="left:467px;top:417px">sudo shutdown <b>-</b>h now</span>
<span class="s p" style="left:647px;top:417px">'</span>
<span class="s n" style="left:656px;top:417px">$</span>
<span class="s n" style="left:332px;top:435px">79</span>
<span class="s p bd" style="left:359px;top:435px">alias</span>
<span class="s o" style="left:413px;top:435px">hibernate</span>
<span class="s p" style="left:494px;top:435px">=</span>
<span class="s p" style="left:503px;top:435px">'</span>
<span class="s y" style="left:512px;top:435px">sudo pm<b>-</b>hibernate</span>
<span class="s p" style="left:665px;top:435px">'</span>
<span class="s n" style="left:674px;top:435px">$</span>
<span class="s n" style="left:332px;top:453px">80</span>
<span class="s p bd" style="left:359px;top:453px">alias</span>
<span class="s o" style="left:413px;top:453px">suspend</span>
<span class="s p" style="left:476px;top:453px">=</span>
<span class="s p" style="left:485px;top:453px">'</span>
<span class="s y" style="left:494px;top:453px">sudo pm<b>-</b>suspend</span>
<span class="s p" style="left:629px;top:453px">'</span>
<span class="s n" style="left:638px;top:453px">$</span>
<span class="s n" style="left:332px;top:471px">81</span>
<span class="s n" style="left:359px;top:471px">$</span>
<span class="s n" style="left:332px;top:489px">82</span>
<span class="s c" style="left:359px;top:489px">#other aliases</span>
<span class="s n" style="left:485px;top:489px">$</span>
<span class="s n" style="left:332px;top:507px">83</span>
<span class="s p bd" style="left:359px;top:507px">alias</span>
<span class="s o" style="left:413px;top:507px">rm</span>
<span class="s p" style="left:431px;top:507px">=</span>
<span class="s p" style="left:440px;top:507px">'</span>
<span class="s y" style="left:449px;top:507px">rm <b>-</b>i</span>
<span class="s p" style="left:494px;top:507px">'</span>
<span class="s n" style="left:503px;top:507px">$</span>
<span class="s n" style="left:332px;top:525px">84</span>
<span class="s n" style="left:359px;top:525px">$</span>
<span class="s n" style="left:332px;top:543px">85</span>
<span class="s p bd" style="left:359px;top:543px">alias</span>
<span class="s o" style="left:413px;top:543px">mounthdd</span>
<span class="s p" style="left:485px;top:543px">=</span>
<span class="s p" style="left:494px;top:543px">'</span>
<span class="s y" style="left:503px;top:543px">sudo /usr/local/bin/ntfs<b>-</b>3g /dev/disk2s1 /Volumes/NTFS <b>-</b>olocal <b>-</b>oallow_other</span>
<span class="s p" style="left:1187px;top:543px">'</span>
<span class="s n" style="left:1196px;top:543px">$</span>
<span class="s n" style="left:332px;top:561px">86</span>
<span class="s p bd" style="left:359px;top:561px">alias</span>
<span class="s o" style="left:413px;top:561px">umounthdd</span>
<span class="s p" style="left:494px;top:561px">=</span>
<span class="s p" style="left:503px;top:561px">'</span>
<span class="s y" style="left:512px;top:561px">sudo umount /Volumes/NTFS</span>
<span class="s p" style="left:737px;top:561px">'</span>
<span class="s n" style="left:746px;top:561px">$</span>
<span class="s n" style="left:332px;top:579px">87</span>
<span class="s n" style="left:359px;top:579px">$</span>
<span class="s n" style="left:332px;top:597px">88</span>
<span class="s c" style="left:359px;top:597px"># Run tmux in 256 colors mode</span>
<span class="s n" style="left:620px;top:597px">$</span>
<span class="s n" style="left:332px;top:615px">89</span>
<span class="s p bd" style="left:359px;top:615px">alias</span>
<span class="s o" style="left:413px;top:615px">tmux</span>
<span class="s p" style="left:449px;top:615px">=</span>
<span class="s p" style="left:458px;top:615px">'</span>
<span class="s y" style="left:467px;top:615px">tmux <b>-</b>2</span>
<span class="s p" style="left:530px;top:615px">'</span>
<span class="s n" style="left:539px;top:615px">$</span>
<span class="s n" style="left:332px;top:633px">90</span>
<span class="s c" style="left:359px;top:633px">#<b>-</b><b>-</b><b>-</b><b>-</b><b>-</b><b>-</b><b>-</b><b>-</b><b>-</b><b>-</b><b>-</b><b>-</b><b>-</b><b>-</b><b>-</b><b>-</b><b>-</b><b>-</b><b>-</b><b>-</b><b>-</b><b>-</b><b>-</b><b>-</b><b>-</b><b>-</b><b>-</b><b>-</b><b>-</b><b>-</b><b>-</b><b>-</b><b>-</b><b>-</b><b>-</b><b>-</b><b>-</b><b>-</b><b>-</b><b>-</b><b>-</b><b>-</b><b>-</b><b>-</b><b>-</b><b>-</b><b>-</b><b>-</b><b>-</b><b>-</b><b>-</b><b>-</b><b>-</b><b>-</b><b>-</b><b>-</b><b>-</b><b>-</b><b>-</b><b>-</b><b>-</b></span>
<span class="s n" style="left:917px;top:633px">$</span>
<i class="k" style="left:305px;top:651px;width:72px;background:#dfff00"></i>
<span class="s nv bd" style="left:314px;top:651px">NORMAL</span>
<i class="k" style="left:377px;top:651px;width:171px;background:#444444"></i>
<span class="s wh" style="left:386px;top:651px">+0 ~0 <b>-</b>0</span>
<svg class="ic" style="left:467px;top:651px" width="18" height="18" viewBox="0 0 18 18" fill="#ffffff"><path d="M1.8 2.8V14M1.8 10.8C6 9.6 9.6 8 9.8 3M5.6 9.2C6 8 6 6.5 6 4.4" stroke="#ffffff" stroke-width="1.6" fill="none"/></svg>
<span class="s wh" style="left:485px;top:651px">master</span>
<i class="k" style="left:548px;top:651px;width:198px;background:#202020"></i>
<span class="s aq" style="left:557px;top:651px">alias.bash</span>
<span class="s aq" style="left:683px;top:651px">sh</span>
<svg class="ic" style="left:710px;top:651px" width="18" height="18" viewBox="0 0 18 18" fill="#9cffd3"><rect x="0" y="3.8" width="11.3" height="9.4" rx="1"/><path d="M2.2 6.5L4 7.7L2.2 8.9M4.5 9.2H6.8" stroke="#202020" stroke-width=".8" stroke-opacity=".75" fill="none"/></svg>
<i class="k" style="left:746px;top:651px;width:108px;background:#444444"></i>
<span class="s wh" style="left:764px;top:651px">utf<b>-</b>8</span>
<svg class="ic" style="left:818px;top:651px" width="18" height="18" viewBox="0 0 18 18" fill="#ffffff"><path d="M7.3 2.2C7.4 3.3 6.5 4.5 5.3 4.6C5.1 3.5 6.2 2.3 7.3 2.2ZM5.6 5.3C6.3 5.3 7 4.8 7.9 4.8C8.8 4.8 9.8 5.3 10.4 6.2C8.5 7.4 8.8 10 10.8 10.8C10.3 12.2 9.1 14.3 7.9 14.3C7.1 14.3 6.7 13.8 5.8 13.8C4.9 13.8 4.4 14.3 3.7 14.3C2.3 14.3 0.4 11.5 0.4 8.9C0.4 6.3 2 4.9 3.4 4.9C4.3 4.9 5 5.3 5.6 5.3Z"/></svg>
<i class="k" style="left:854px;top:651px;width:216px;background:#dfff00"></i>
<span class="s nv" style="left:872px;top:651px">92%</span>
<span class="s nv dj" style="left:908px;top:651px">☰</span>
<span class="s nv bd" style="left:944px;top:651px">83/90</span>
<span class="s nv cj" style="left:998px;top:651px">㏑</span>
<span class="s nv" style="left:1025px;top:651px">:</span>
<span class="s nv" style="left:1052px;top:651px">1</span>
<i class="k" style="left:1070px;top:651px;width:351px;background:#df5f00"></i>
<span class="s bk dj2" style="left:1079px;top:651px">☲</span>
<span class="s bk" style="left:1097px;top:651px">[76]trailing [18:54]mix<b>-</b>indent<b>-</b>file</span>
<span class="s w" style="left:305px;top:669px">export PATH="$PATH:$HOME/.rvm/bin"</span>
<span class="s w" style="left:305px;top:687px">export PATH="/usr/local/opt/mysql@5.5/bin:$PATH"</span>
<span class="s w" style="left:305px;top:705px">source &lt;(kubectl completion bash)</span>
<span class="s w" style="left:305px;top:723px">source &lt;(kubectl completion bash)</span>
<i class="k" style="left:305px;top:741px;width:27px;background:#262626"></i>
<svg class="ic" style="left:313.2px;top:741px" width="18" height="18" viewBox="0 0 18 18" fill="#f4f4ee"><path d="M7.3 2.2C7.4 3.3 6.5 4.5 5.3 4.6C5.1 3.5 6.2 2.3 7.3 2.2ZM5.6 5.3C6.3 5.3 7 4.8 7.9 4.8C8.8 4.8 9.8 5.3 10.4 6.2C8.5 7.4 8.8 10 10.8 10.8C10.3 12.2 9.1 14.3 7.9 14.3C7.1 14.3 6.7 13.8 5.8 13.8C4.9 13.8 4.4 14.3 3.7 14.3C2.3 14.3 0.4 11.5 0.4 8.9C0.4 6.3 2 4.9 3.4 4.9C4.3 4.9 5 5.3 5.6 5.3Z"/></svg>
<i class="k" style="left:332px;top:741px;width:108px;background:#0000e0"></i>
<svg class="ic" style="left:332px;top:741px" width="9" height="18" viewBox="0 0 9 18" fill="#262626"><path d="M0 0L8 9L0 18Z"/></svg>
<span class="s pw" style="left:350px;top:741px">~/configs</span>
<i class="k" style="left:440px;top:741px;width:117px;background:#e4e4e4"></i>
<svg class="ic" style="left:440px;top:741px" width="9" height="18" viewBox="0 0 9 18" fill="#0000e0"><path d="M0 0L8 9L0 18Z"/></svg>
<svg class="ic" style="left:458px;top:741px" width="18" height="18" viewBox="0 0 18 18" fill="#000000"><path d="M1.7 .5V17M1.7 15C1.7 10.5 5.6 10.5 5.6 6.5V3.4" stroke="#000000" stroke-width="1.6" fill="none"/><path d="M5.6 1.4L8.2 5.4H3Z"/></svg>
<span class="s bk" style="left:476px;top:741px">master</span>
<span class="s rd bd xx" style="left:539px;top:741px">✗</span>
<svg class="ic" style="left:557px;top:741px" width="9" height="18" viewBox="0 0 9 18" fill="#e4e4e4"><path d="M0 0L8 9L0 18Z"/></svg>
<span class="s tg bd" style="left:575px;top:741px">$</span>
<i class="k" style="left:584.2px;top:756px;width:8.8px;height:1.7px;background:#000"></i>
<span class="s w" style="left:593px;top:741px">:redraw!|call fugitive#Resume()|silent checktime</span>
<span class="s w" style="left:305px;top:759px">bash: !: event not found</span>
<i class="k" style="left:305px;top:777px;width:27px;background:#262626"></i>
<svg class="ic" style="left:313.2px;top:777px" width="18" height="18" viewBox="0 0 18 18" fill="#f4f4ee"><path d="M7.3 2.2C7.4 3.3 6.5 4.5 5.3 4.6C5.1 3.5 6.2 2.3 7.3 2.2ZM5.6 5.3C6.3 5.3 7 4.8 7.9 4.8C8.8 4.8 9.8 5.3 10.4 6.2C8.5 7.4 8.8 10 10.8 10.8C10.3 12.2 9.1 14.3 7.9 14.3C7.1 14.3 6.7 13.8 5.8 13.8C4.9 13.8 4.4 14.3 3.7 14.3C2.3 14.3 0.4 11.5 0.4 8.9C0.4 6.3 2 4.9 3.4 4.9C4.3 4.9 5 5.3 5.6 5.3Z"/></svg>
<i class="k" style="left:332px;top:777px;width:108px;background:#0000e0"></i>
<svg class="ic" style="left:332px;top:777px" width="9" height="18" viewBox="0 0 9 18" fill="#262626"><path d="M0 0L8 9L0 18Z"/></svg>
<span class="s pw" style="left:350px;top:777px">~/configs</span>
<i class="k" style="left:440px;top:777px;width:135px;background:#e4e4e4"></i>
<svg class="ic" style="left:440px;top:777px" width="9" height="18" viewBox="0 0 9 18" fill="#0000e0"><path d="M0 0L8 9L0 18Z"/></svg>
<svg class="ic" style="left:458px;top:777px" width="18" height="18" viewBox="0 0 18 18" fill="#000000"><path d="M1.7 .5V17M1.7 15C1.7 10.5 5.6 10.5 5.6 6.5V3.4" stroke="#000000" stroke-width="1.6" fill="none"/><path d="M5.6 1.4L8.2 5.4H3Z"/></svg>
<span class="s bk" style="left:476px;top:777px">master</span>
<span class="s rd bd xx" style="left:539px;top:777px">✗</span>
<svg class="ic" style="left:557px;top:777px" width="18" height="18" viewBox="0 0 18 18" fill="#000000"><path d="M3.8 4.3L6.7 8H4.9V12.6H2.7V8H.9Z"/></svg>
<svg class="ic" style="left:575px;top:777px" width="9" height="18" viewBox="0 0 9 18" fill="#e4e4e4"><path d="M0 0L8 9L0 18Z"/></svg>
<span class="s tg bd" style="left:593px;top:777px">$</span>
<i class="k" style="left:602.2px;top:792px;width:8.8px;height:1.7px;background:#000"></i>
<i class="k" style="left:17px;top:1011px;width:234px;background:#1e1e1e"></i>
<span class="s dm" style="left:26px;top:1011px">/Users/akarneyeu/configs</span>
<i class="k" style="left:251px;top:1011px;width:45px;background:#3a3a40"></i>
<i class="k" style="left:296px;top:1011px;width:9px;background:#878787"></i>
<i class="k" style="left:305px;top:1011px;width:90px;background:#1c1c1c"></i>
<span class="s dm" style="left:314px;top:1011px">TERMINAL</span>
<i class="k" style="left:395px;top:1011px;width:1026px;background:#262626"></i>
<span class="s dm" style="left:404px;top:1011px">!/bin/bash [running]</span>
<span class="s w" style="left:17px;top:1029px">:</span>
<i class="k" style="left:26px;top:1029px;width:9px;background:#f8f8f0"></i>
<div id="title"><span>alias.bash (~/configs) - VIM2</span>
<i class="tl" style="left:8px;background:#fe5f57"></i><i class="tl" style="left:28px;background:#febc2e"></i><i class="tl" style="left:48px;background:#28c840"></i></div>
<div id="edge"></div><div id="c1"></div>
<i style="position:absolute;left:0;top:1043px;width:5px;height:4px;background:radial-gradient(circle at 100% 0,rgba(90,92,92,0) 3.2px,#5a5c5c 4.4px)"></i>
<i style="position:absolute;left:1431px;top:1044px;width:4px;height:3px;background:radial-gradient(circle at 0 0,rgba(70,70,72,0) 2.6px,#48484a 3.6px)"></i>
<svg class="ic" style="left:1181px;top:473px" width="16" height="22" viewBox="0 0 16 22"><path d="M2.7 2.3V16.3L5.9 13.5L8.4 18.7L10.8 17.6L8.4 12.4H12.9Z" fill="#000" stroke="#fff" stroke-width="1.1" stroke-linejoin="round"/></svg>
</div>
</body></html>
